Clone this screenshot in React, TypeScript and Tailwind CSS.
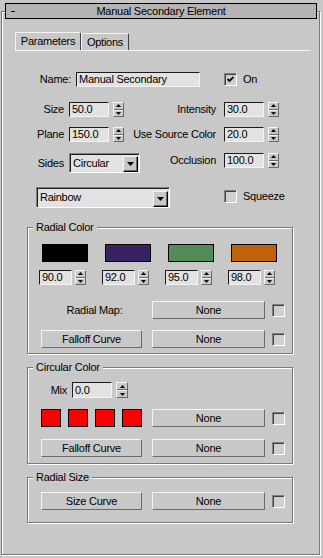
import type { ReactNode } from 'react'

const raised = 'border border-t-[#f4f4f4] border-l-[#f4f4f4] border-r-[#6a6a6a] border-b-[#6a6a6a] bg-[#c8c8c8]'
const sunken = 'border border-t-[#1c1c1c] border-l-[#1c1c1c] border-r-[#f4f4f4] border-b-[#f4f4f4]'

function Edit({ className, value }: { className: string; value: string }) {
  return (
    <div className={`flex items-center bg-[#e2e2e2] pl-[2px] leading-none ${sunken} ${className}`}>
      {value}
    </div>
  )
}

function Spinner({ className }: { className: string }) {
  return (
    <div className={`flex flex-col ${raised} ${className}`}>
      <div className="flex flex-1 items-center justify-center border-b border-b-[#6a6a6a]">
        <svg width="5" height="3" viewBox="0 0 5 3">
          <path d="M2.5 0L5 3H0z" fill="#000" />
        </svg>
      </div>
      <div className="flex flex-1 items-center justify-center border-t border-t-[#f4f4f4]">
        <svg width="5" height="3" viewBox="0 0 5 3">
          <path d="M0 0H5L2.5 3z" fill="#000" />
        </svg>
      </div>
    </div>
  )
}

function Check({ checked = false }: { checked?: boolean }) {
  return (
    <div className="flex h-[13px] w-[13px] shrink-0 items-center justify-center border border-t-[#808080] border-l-[#808080] border-r-white border-b-white bg-[#cfcfcf] shadow-[inset_1px_1px_0_#404040]">
      {checked && (
        <svg width="7" height="7" viewBox="0 0 7 7">
          <path d="M0.5 3L2.5 5L6.5 1" stroke="#000" strokeWidth="1.8" fill="none" />
        </svg>
      )}
    </div>
  )
}

function Select({ className, value, arrow }: { className: string; value: string; arrow: string }) {
  return (
    <div
      className={`flex items-center justify-between border border-t-[#808080] border-l-[#808080] border-r-white border-b-white bg-[#e2e2e2] shadow-[inset_1px_1px_0_#1c1c1c] ${className}`}
    >
      <span className="pl-[3px]">{value}</span>
      <div
        className={`mr-[1px] mt-[1px] flex w-[15px] items-center justify-center border border-t-[#f4f4f4] border-l-[#f4f4f4] border-r-black border-b-black bg-[#c8c8c8] shadow-[inset_-1px_-1px_0_#6a6a6a] ${arrow}`}
      >
        <svg width="7" height="4" viewBox="0 0 7 4">
          <path d="M0 0H7L3.5 4z" fill="#000" />
        </svg>
      </div>
    </div>
  )
}

function Btn({ className, children }: { className: string; children: ReactNode }) {
  return <div className={`flex h-[18px] items-center justify-center ${raised} ${className}`}>{children}</div>
}

function Group({ title, className, children }: { title: string; className: string; children: ReactNode }) {
  return (
    <div
      className={`relative ml-[25px] w-[266px] border border-[#787878] shadow-[inset_1px_1px_0_#fff,1px_1px_0_#fff] ${className}`}
    >
      <span className="absolute -top-[8px] left-[5px] bg-[#c8c8c8] px-[3px] leading-[14px]">{title}</span>
      {children}
    </div>
  )
}

function NoneRow({ left, className }: { left: ReactNode; className: string }) {
  return (
    <div className={`flex h-[18px] items-center ${className}`}>
      {left}
      <Btn className="ml-[10px] w-[113px]">None</Btn>
      <div className="ml-[7px]">
        <Check />
      </div>
    </div>
  )
}

const radial = [
  { color: 'bg-[#000000]', value: '90.0' },
  { color: 'bg-[#3a2160]', value: '92.0' },
  { color: 'bg-[#548c58]', value: '95.0' },
  { color: 'bg-[#c0620a]', value: '98.0' },
]

export default function App() {
  return (
    <div className="relative h-[558px] w-[323px] overflow-hidden bg-[#c8c8c8] pl-[1px] pt-[11px] font-['Liberation_Sans',Arial,sans-serif] text-[11px] tracking-[-0.25px] text-black">
      {/* panel frame */}
      <div className="h-[544px] w-[319px] border border-[#787878] shadow-[inset_1px_1px_0_#fff,1px_1px_0_#fff]">
        {/* tabs */}
        <div className="ml-[13px] mt-[20px] flex h-[19px] w-[295px] items-end border-b border-b-[#f4f4f4]">
          <div className="flex h-[18px] w-[66px] items-center justify-center rounded-t-[2px] border border-b-0 border-t-[#f4f4f4] border-l-[#f4f4f4] border-r-[#404040]">
            Parameters
          </div>
          <div className="flex h-[17px] w-[48px] items-center justify-center rounded-t-[2px] border border-b-0 border-t-[#f4f4f4] border-l-[#f4f4f4] border-r-[#404040]">
            Options
          </div>
        </div>

        {/* name */}
        <div className="mt-[21px] flex h-[15px] items-center">
          <div className="w-[69px] text-right">Name:</div>
          <Edit className="ml-[5px] h-[15px] w-[124px]" value="Manual Secondary" />
          <div className="ml-[24px]">
            <Check checked />
          </div>
          <span className="ml-[6px]">On</span>
        </div>

        {/* size / intensity */}
        <div className="mt-[15px] flex h-[15px] items-center">
          <div className="w-[62px] text-right">Size</div>
          <Edit className="ml-[5px] h-[15px] w-[40px]" value="50.0" />
          <Spinner className="ml-[4px] h-[15px] w-[11px]" />
          <div className="w-[92px] text-right">Intensity</div>
          <Edit className="ml-[8px] h-[15px] w-[40px]" value="30.0" />
          <Spinner className="ml-[4px] h-[15px] w-[11px]" />
        </div>

        {/* plane / source color */}
        <div className="mt-[10px] flex h-[15px] items-center">
          <div className="w-[62px] text-right">Plane</div>
          <Edit className="ml-[5px] h-[15px] w-[40px]" value="150.0" />
          <Spinner className="ml-[4px] h-[15px] w-[11px]" />
          <div className="w-[92px] text-right">Use Source Color</div>
          <Edit className="ml-[8px] h-[15px] w-[40px]" value="20.0" />
          <Spinner className="ml-[4px] h-[15px] w-[11px]" />
        </div>

        {/* sides / occlusion */}
        <div className="mt-[11px] flex h-[20px] items-start">
          <div className="flex h-[20px] items-center">
            <div className="w-[62px] text-right">Sides</div>
            <Select className="ml-[5px] h-[20px] w-[71px]" value="Circular" arrow="h-[16px]" />
          </div>
          <div className="flex h-[15px] items-center">
            <div className="w-[76px] text-right">Occlusion</div>
            <Edit className="ml-[8px] h-[15px] w-[40px]" value="100.0" />
            <Spinner className="ml-[4px] h-[15px] w-[11px]" />
          </div>
        </div>

        {/* rainbow / squeeze */}
        <div className="mt-[14px] flex h-[21px] items-start">
          <Select className="ml-[34px] h-[21px] w-[134px]" value="Rainbow" arrow="h-[16px] mt-[2px]" />
          <div className="ml-[54px] mt-[1px] flex items-center">
            <Check />
            <span className="ml-[6px]">Squeeze</span>
          </div>
        </div>

        <Group title="Radial Color" className="mt-[19px] h-[127px]">
          <div className="ml-[14px] mt-[16px] flex h-[18px] gap-[17px]">
            {radial.map((r) => (
              <div key={r.value} className={`h-[18px] w-[46px] border border-black ${r.color}`} />
            ))}
          </div>
          <div className="ml-[11px] mt-[8px] flex h-[15px] gap-[16px]">
            {radial.map((r) => (
              <div key={r.value} className="flex">
                <Edit className="h-[15px] w-[33px]" value={r.value} />
                <Spinner className="ml-[3px] h-[15px] w-[11px]" />
              </div>
            ))}
          </div>
          <NoneRow
            className="ml-[13px] mt-[16px]"
            left={<div className="w-[101px] pl-[6px] text-center">Radial Map:</div>}
          />
          <NoneRow className="ml-[13px] mt-[11px]" left={<Btn className="w-[101px]">Falloff Curve</Btn>} />
        </Group>

        <Group title="Circular Color" className="mt-[13px] h-[97px]">
          <div className="mt-[14px] flex h-[16px] items-center">
            <div className="w-[39px] text-right">Mix</div>
            <Edit className="ml-[5px] h-[16px] w-[40px]" value="0.0" />
            <Spinner className="ml-[4px] h-[16px] w-[12px]" />
          </div>
          <NoneRow
            className="ml-[13px] mt-[11px]"
            left={
              <div className="flex gap-[7px]">
                {[0, 1, 2, 3].map((i) => (
                  <div key={i} className="h-[18px] w-[20px] border border-black bg-[#ff0000]" />
                ))}
              </div>
            }
          />
          <NoneRow className="ml-[13px] mt-[12px]" left={<Btn className="w-[101px]">Falloff Curve</Btn>} />
        </Group>

        <Group title="Radial Size" className="mt-[13px] h-[46px]">
          <NoneRow className="ml-[13px] mt-[14px]" left={<Btn className="w-[101px]">Size Curve</Btn>} />
        </Group>
      </div>

      {/* rollout title bar */}
      <div className="absolute left-[5px] top-[3px] flex h-[16px] w-[312px] items-center border border-black bg-[#b4b4b4]">
        <div className="ml-[5px] h-[1px] w-[4px] bg-black" />
        <div className="flex-1 pr-[9px] text-center leading-none">Manual Secondary Element</div>
      </div>
    </div>
  )
}
